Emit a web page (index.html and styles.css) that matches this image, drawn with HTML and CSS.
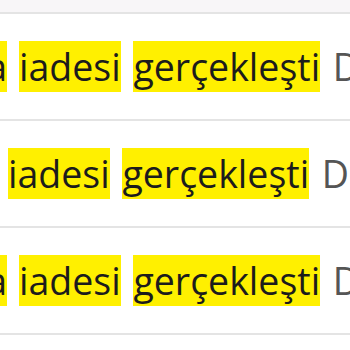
FILE: index.html
```html
<!DOCTYPE html>
<html lang="tr">
<head>
<meta charset="utf-8">
<link rel="stylesheet" href="styles.css">
</head>
<body>
<div class="top"></div>
<div class="row">
  <span class="clip"><mark>Para</mark></span>
  <span class="rest"><mark>iadesi</mark> <mark>gerçekleşti</mark> <span class="muted">Dekont</span></span>
</div>
<div class="row row-shift">
  <span class="rest"><mark>iadesi</mark> <mark>gerçekleşti</mark> <span class="muted">Dekont</span></span>
</div>
<div class="row">
  <span class="clip"><mark>Para</mark></span>
  <span class="rest"><mark>iadesi</mark> <mark>gerçekleşti</mark> <span class="muted">Dekont</span></span>
</div>
<div class="bottom"></div>
</body>
</html>
```
FILE: styles.css
```css
html, body {
  margin: 0;
  padding: 0;
  background: #ffffff;
  width: 350px;
  height: 350px;
  overflow: hidden;
}
.top {
  height: 12px;
  background: #f8f6f8;
}
.row {
  height: 105px;
  border-top: 2px solid #e4e4e4;
  display: flex;
  align-items: center;
  overflow: hidden;
  white-space: nowrap;
  font-family: "Open Sans", sans-serif;
  font-size: 37.5px;
  color: #1c1c1c;
  word-spacing: 3px;
}
.bottom {
  border-top: 2px solid #e4e4e4;
  height: 20px;
  background: #ffffff;
}
.clip {
  width: 7px;
  flex: none;
  overflow: hidden;
  display: flex;
  justify-content: flex-end;
}
.rest {
  flex: none;
  margin-left: 12px;
}
.row-shift .rest {
  margin-left: 8px;
}
mark {
  background: #fff000;
  color: #1c1c1c;
}
.muted {
  color: #555555;
}
```
